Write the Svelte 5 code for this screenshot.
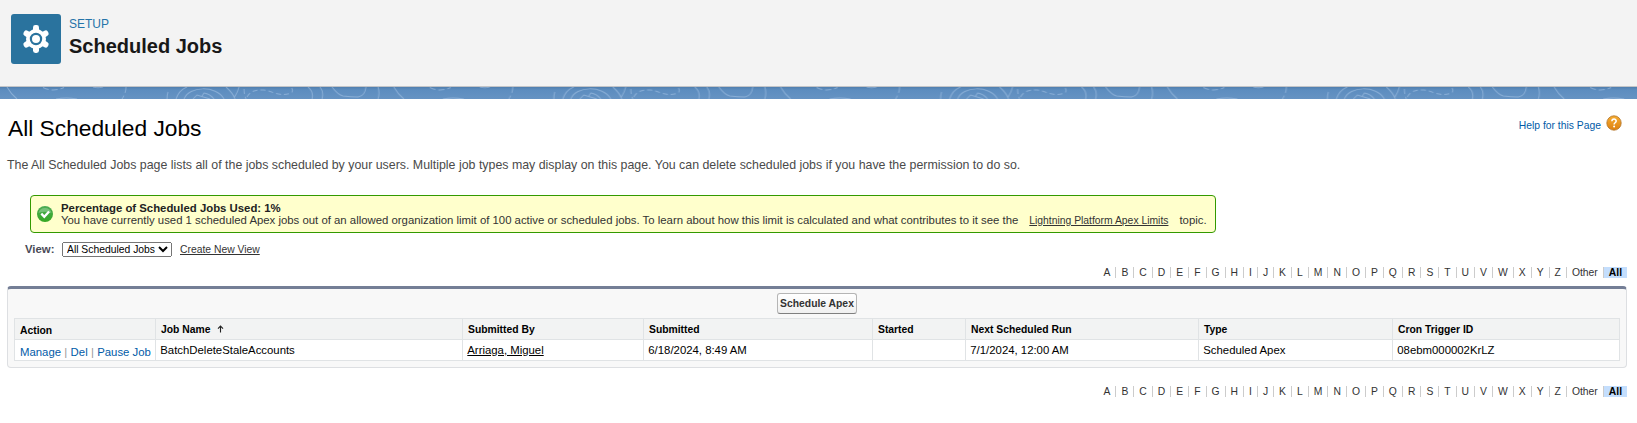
<script>
  const letters = [...'ABCDEFGHIJKLMNOPQRSTUVWXYZ', 'Other', 'All'];
  const columns = [
    ['Action', 141],
    ['Job Name', 307],
    ['Submitted By', 181],
    ['Submitted', 229],
    ['Started', 93],
    ['Next Scheduled Run', 233],
    ['Type', 194],
    ['Cron Trigger ID', 227]
  ];
</script>

{#snippet rolodex()}
  <nav class="rolodex">
    {#each letters as letter}
      <a href="#list" class:active={letter === 'All'}>{letter}</a>
    {/each}
  </nav>
{/snippet}

<header>
  <div class="badge">
    <svg viewBox="0 0 50 50" width="50" height="50">
      <g fill="#fff">
        <circle cx="25" cy="25" r="10" />
        {#each [0, 60, 120, 180, 240, 300] as angle}
          <rect x="22" y="11.1" width="6" height="8" rx="2.4" transform="rotate({angle} 25 25)" />
        {/each}
      </g>
      <circle cx="25" cy="25" r="5.1" fill="#fff" stroke="#2a739e" stroke-width="2.2" />
    </svg>
  </div>
  <div class="titles">
    <span class="eyebrow">SETUP</span>
    <h1>Scheduled Jobs</h1>
  </div>
</header>

<div class="band">
  <svg width="1637" height="12">
    <defs>
      <linearGradient id="shade" x1="0" y1="0" x2="0" y2="1">
        <stop offset="0" stop-color="#507fae" />
        <stop offset="0.25" stop-color="#5d8dbf" />
        <stop offset="1" stop-color="#6693c3" />
      </linearGradient>
      <pattern id="topo" width="386.800" height="12" patternUnits="userSpaceOnUse">
        <g fill="none" stroke="#a9c6e6" stroke-opacity=".55" stroke-width="1">
          <path d="M7 0q4 7 10 12" />
          <path d="M43 .5q10 5 21 0" stroke-dasharray="6 3" />
          <path d="M56 12q10-2 21 0M93 0q5 1.500 10 0" />
          <path d="M126 0q0 6-4 12" stroke-dasharray="6 3" />
          <path d="M168 5q-1 3-1 7" />
          <path d="M176 12q3-9 11-12M184 12c5-13 32-14 40 0M193 12l4-4 13 4M202 9l2-3q6 1 10 6M226 0q7 6 9 12M239 0q-1 5-5 11" />
          <path d="M244 2q0 5 2 10M247 10q4-8 17-7q6 1 10 3q10 3 17 0q3-2 0-6" stroke-dasharray="5 3" />
          <path d="M308 0q6 5 4 12M320 0q4 5 2 12M332 0q6 8 11 9q8 1 15 1q7-1 8-10M378 0q2 6 0 12" />
        </g>
      </pattern>
    </defs>
    <rect width="1637" height="12" fill="url(#shade)" />
    <rect width="1637" height="12" fill="url(#topo)" />
  </svg>
</div>

<main>
  <div class="heading">
    <h2>All Scheduled Jobs</h2>
    <a class="help" href="#help">
      <span>Help for this Page</span>
      <svg viewBox="0 0 16 16" width="16" height="16">
        <defs>
          <linearGradient id="orange" x1="0" y1="0" x2="0" y2="1">
            <stop offset="0" stop-color="#f6ad32" />
            <stop offset="1" stop-color="#dd8010" />
          </linearGradient>
        </defs>
        <circle cx="8" cy="8" r="7.2" fill="url(#orange)" stroke="#b0732a" stroke-width=".8" />
        <path d="M5.900 6.300c0-2.900 4.300-2.900 4.300-.2 0 1.600-2.100 1.700-2.100 3.300" fill="none" stroke="#fff" stroke-width="1.500" />
        <circle cx="8.100" cy="11.600" r="1" fill="#fff" />
      </svg>
    </a>
  </div>

  <p class="intro">The All Scheduled Jobs page lists all of the jobs scheduled by your users. Multiple job types may display on this page. You can delete scheduled jobs if you have the permission to do so.</p>

  <section class="notice">
    <svg viewBox="0 0 16 16" width="16" height="16">
      <defs>
        <linearGradient id="green" x1="0" y1="0" x2="0" y2="1">
          <stop offset="0" stop-color="#4cab56" />
          <stop offset="1" stop-color="#35a822" />
        </linearGradient>
      </defs>
      <circle cx="8" cy="8" r="8" fill="url(#green)" />
      <path d="M1.500 7a6.700 6.700 0 0 1 13 0q-6.500-2.500-13 0z" fill="#8acb8c" opacity=".7" />
      <path d="M4.300 7.600l3 3.200 4.800-5.300" fill="none" stroke="#fff" stroke-width="2.300" />
    </svg>
    <div>
      <strong>Percentage of Scheduled Jobs Used: 1%</strong>
      <div class="detail">You have currently used 1 scheduled Apex jobs out of an allowed organization limit of 100 active or scheduled jobs. To learn about how this limit is calculated and what contributes to it see the<a href="#limits">Lightning Platform Apex Limits</a>topic.</div>
    </div>
  </section>

  <div class="view">
    <label for="view">View:</label>
    <select id="view"><option>All Scheduled Jobs</option></select>
    <a href="#create">Create New View</a>
  </div>

  {@render rolodex()}

  <section class="panel">
    <div class="toolbar"><button>Schedule Apex</button></div>
    <table>
      <colgroup>
        {#each columns as [, width]}<col style="width:{width}px" />{/each}
      </colgroup>
      <thead>
        <tr>
          {#each columns as [name]}
            <th>{name}{#if name === 'Job Name'}<svg viewBox="0 0 7 8" width="7" height="8"><path d="M3.500 7.500V1M1 3.600L3.500 1 6 3.600" fill="none" stroke="#222" stroke-width="1.100" /></svg>{/if}</th>
          {/each}
        </tr>
      </thead>
      <tbody>
        <tr>
          <td class="actions"><a href="#manage">Manage</a><i>|</i><a href="#del">Del</a><i>|</i><a href="#pause">Pause Job</a></td>
          <td>BatchDeleteStaleAccounts</td>
          <td><a class="user" href="#user">Arriaga, Miguel</a></td>
          <td>6/18/2024, 8:49 AM</td>
          <td></td>
          <td>7/1/2024, 12:00 AM</td>
          <td>Scheduled Apex</td>
          <td>08ebm000002KrLZ</td>
        </tr>
      </tbody>
    </table>
  </section>

  {@render rolodex()}
</main>

<style>
  :global(body) {
    background: #fff;
    color: #222;
    font-family: "Liberation Sans", Arial, sans-serif;
    font-size: 11.375px;
  }
  * { box-sizing: border-box; }
  h1, h2, p { margin: 0; }
  svg { display: block; flex: none; }
  header {
    display: flex;
    height: 87px;
    padding: 14px 11px 0;
    background: #f3f3f3;
    border-bottom: 1px solid #c3c5c8;
  }
  .badge { width: 50px; height: 50px; border-radius: 3px; background: #2a739e; }
  .titles { margin-left: 8px; padding-top: 2px; }
  .eyebrow { display: block; font-size: 12px; line-height: 16px; color: #2574a9; }
  h1 { font-size: 20px; line-height: 25px; color: #181818; padding-top: 2px; }
  .band { height: 12px; overflow: hidden; }
  main { padding: 0 10px 0 7px; }
  .heading { display: flex; justify-content: space-between; height: 57px; padding: 16px 5.5px 0 1px; }
  h2 { font-size: 22.75px; line-height: 27px; font-weight: 400; color: #000; }
  .help { display: flex; gap: 4.5px; height: 16px; font-size: 10.35px; line-height: 21px; color: #015ba7; text-decoration: none; }
  .intro { font-size: 12.38px; line-height: 18px; color: #4a4a4a; white-space: nowrap; }
  .notice {
    display: flex;
    align-items: center;
    gap: 8px;
    width: 1186px;
    height: 38px;
    margin: 21px 0 0 23px;
    padding-left: 6px;
    border: 1px solid #390;
    border-radius: 4px;
    background: #ffc;
    line-height: 12px;
    white-space: nowrap;
  }
  .notice strong { display: block; }
  .detail { color: #333; }
  .detail a { margin: 0 11px; font-size: 10.35px; color: #333; }
  .view { display: flex; align-items: center; height: 16px; margin: 8px 0 0 18px; color: #4a4a56; }
  .view label { width: 37px; font-weight: 700; }
  .view select { width: 110px; height: 15px; margin: 0 8px 0 0; padding: 0; font: 10.35px "Liberation Sans", Arial, sans-serif; color: #000; }
  .view a { font-size: 10.35px; color: #333; }
  .rolodex { display: flex; justify-content: flex-end; height: 11px; margin: 10px 0 8px; font-size: 10.35px; line-height: 11px; }
  .rolodex a { padding: 0 5px; border-right: 1px solid #ccc; color: #333; text-decoration: none; }
  .rolodex a.active { border: 0; background: #c4defd; color: #000; font-weight: 700; }
  .panel {
    width: 1620px;
    height: 82px;
    padding: 0 6px;
    border: 1px solid #dddfe2;
    border-top: 3px solid #747e96;
    border-radius: 4px;
    background: #f8f8f8;
  }
  .panel + .rolodex { margin: 18px 0 0; }
  .toolbar { display: flex; justify-content: center; height: 29px; padding-top: 4px; }
  button {
    width: 80px;
    height: 21px;
    padding: 0;
    border: 1px solid #b5b5b5;
    border-bottom-color: #7f7f7f;
    border-radius: 3px;
    background: linear-gradient(#fff, #f0f0f0);
    color: #333;
    font: 700 10.35px "Liberation Sans", Arial, sans-serif;
  }
  table { width: 1605px; table-layout: fixed; border-collapse: collapse; background: #fff; color: #000; }
  th, td { height: 21px; padding: 0 0 0 5px; border: 1px solid #e0e3e5; text-align: left; vertical-align: middle; line-height: 13px; white-space: nowrap; }
  td { padding-left: 4.3px; }
  th { background: #f2f3f3; font-size: 10.35px; }
  th:first-child { padding-top: 2px; }
  th svg { display: inline-block; margin-left: 6.5px; vertical-align: 0; }
  td.actions { padding: 4px 0 0 5px; }
  .actions a { color: #015ba7; text-decoration: none; }
  .actions i { margin: 0 3.3px; font-style: normal; color: #999; }
  .user { color: #000; }
</style>
